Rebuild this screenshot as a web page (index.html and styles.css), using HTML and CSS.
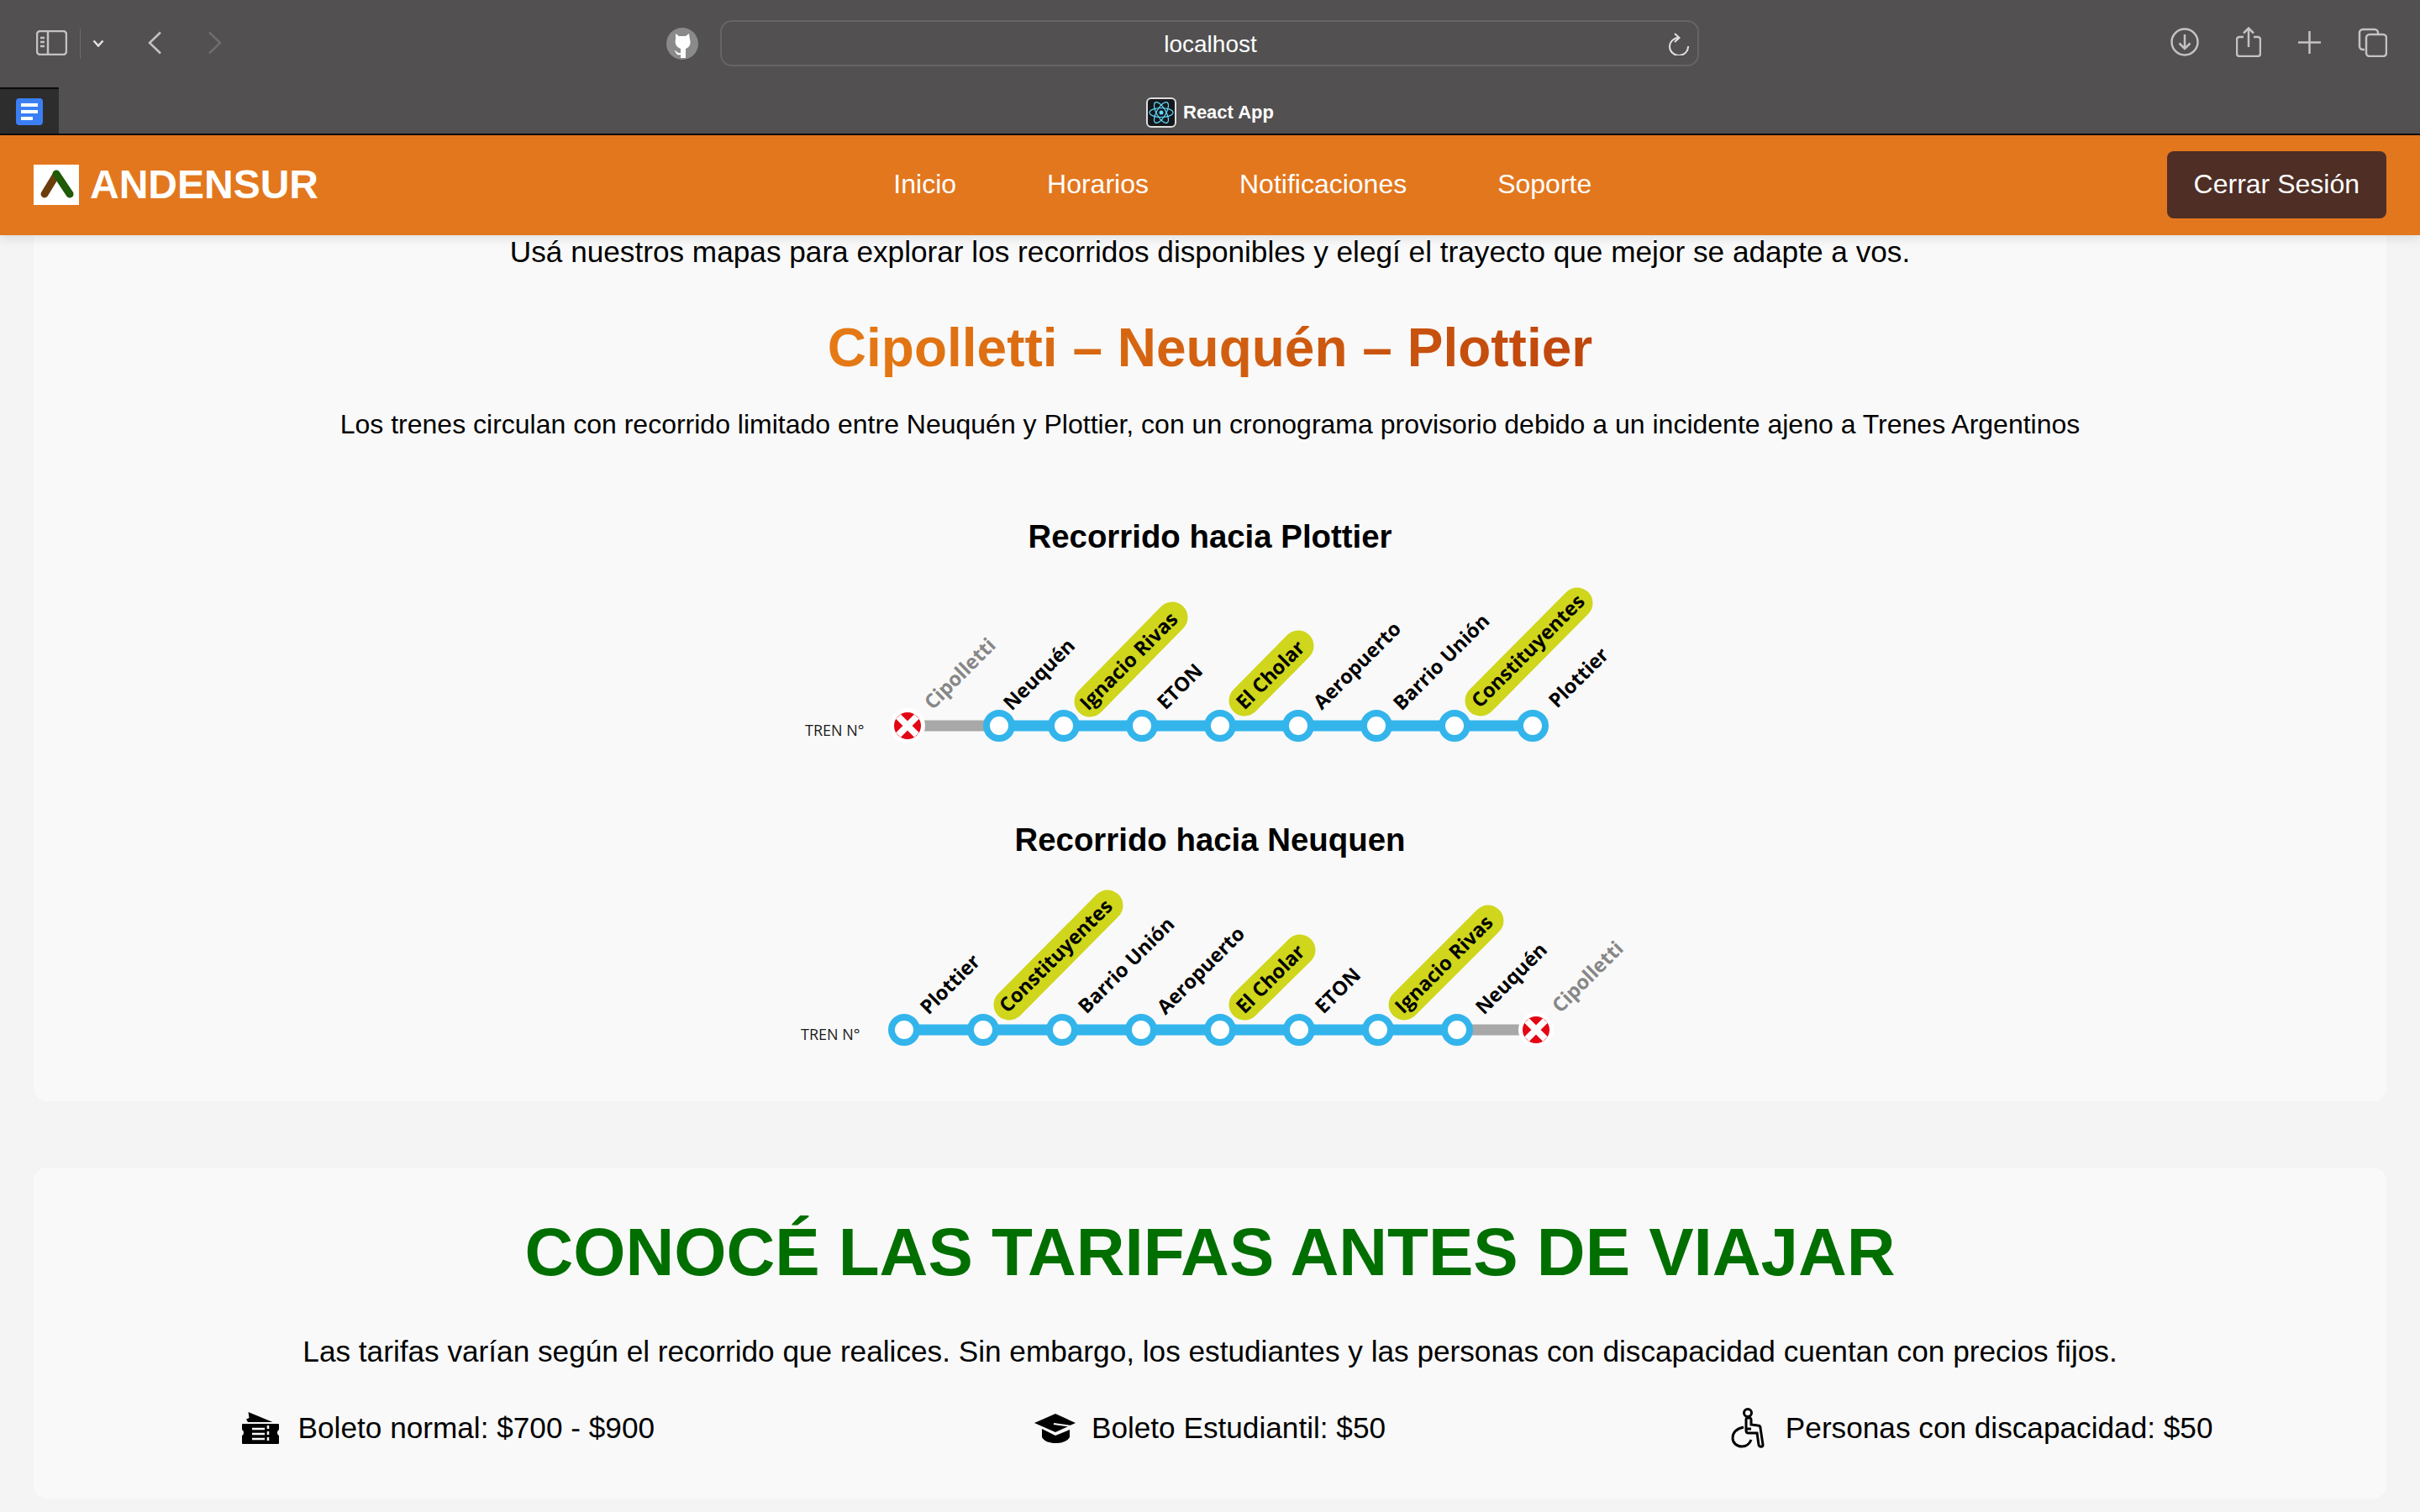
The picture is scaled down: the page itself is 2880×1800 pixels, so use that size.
FILE: index.html
```html
<!DOCTYPE html>
<html lang="es">
<head>
<meta charset="utf-8">
<title>React App</title>
<link rel="stylesheet" href="styles.css">
</head>
<body>
<div class="browser">
  <div class="chrome">
    <div class="toolbar">
      <div class="tool-left">
        <svg class="ic-sidebar" viewBox="0 0 37 30"><rect x="1" y="1" width="35" height="28" rx="4"/><path d="M14 1v28M5 9h5M5 14h5M5 19h5"/></svg>
        <span class="divider"></span>
        <svg class="ic-chev" viewBox="0 0 14 9"><path d="M1.5 1.5 7 7.5l5.500-6"/></svg>
        <svg class="ic-back" viewBox="0 0 17 28"><path d="M15 1.500 2 14l13 12.500"/></svg>
        <svg class="ic-fwd" viewBox="0 0 17 28"><path d="M2 1.500 15 14 2 26.500"/></svg>
      </div>
      <div class="tool-mid">
        <svg class="ic-gh" viewBox="0 0 38 38"><circle cx="19" cy="19" r="19" fill="#8a8a8a"/><path fill="#fff" d="M11 7l4 3h8l4-3 1 7c1 2 1 8-3 10l-2 1v11h-6v-4c-3 1-5 0-6-3l-2-2 3 1c1 2 3 2 5 2v-5l-2-1c-4-2-5-7-4-10z"/></svg>
        <div class="urlbar">
          <span class="url-text">localhost</span>
          <svg class="ic-reload" viewBox="0 0 24 27"><path d="M23 16A11 10.500 0 1 1 12 6M7 1l5.500 5L7 11"/></svg>
        </div>
      </div>
      <div class="tool-right">
        <svg class="ic-dl" viewBox="0 0 34 34"><circle cx="17" cy="17" r="15.500"/><path d="M17 8v17M10.500 18.500 17 25l6.500-6.500"/></svg>
        <svg class="ic-share" viewBox="0 0 30 36"><path d="M9 12H4a3 3 0 0 0-3 3v17a3 3 0 0 0 3 3h22a3 3 0 0 0 3-3V15a3 3 0 0 0-3-3h-5M15 24V2M9 7.500 15 1.500l6 6"/></svg>
        <svg class="ic-plus" viewBox="0 0 27 27"><path d="M13.500 0v27M0 13.500h27"/></svg>
        <svg class="ic-tabs" viewBox="0 0 35 35"><path d="M8 26H6a4 4 0 0 1-4-4V6a4 4 0 0 1 4-4h14a4 4 0 0 1 4 4v1"/><rect x="10" y="8" width="24" height="26" rx="4"/></svg>
      </div>
    </div>
    <div class="tabstrip">
      <div class="pinned">
        <svg class="ic-doc" viewBox="0 0 32 32"><rect width="32" height="32" rx="4" fill="#3b7ff5"/><path fill="#fff" d="M6 6h20v4H6zM6 14h20v4H6zM6 22h14v4H6z"/></svg>
      </div>
      <div class="tab-title">
        <svg class="ic-react" viewBox="0 0 36 36"><rect x="1" y="1" width="34" height="34" rx="5" fill="#14181c" stroke="#ddd" stroke-width="2"/><g fill="none" stroke="#61dafb" stroke-width="1.200"><ellipse cx="18" cy="18" rx="14" ry="5.500"/><ellipse cx="18" cy="18" rx="14" ry="5.500" transform="rotate(60 18 18)"/><ellipse cx="18" cy="18" rx="14" ry="5.500" transform="rotate(120 18 18)"/></g><circle cx="18" cy="18" r="2.500" fill="#61dafb"/></svg>
        <span>React App</span>
      </div>
    </div>
  </div>

  <header class="site-header">
    <div class="brand">
      <svg class="logo" viewBox="0 0 54 48"><rect width="54" height="48" fill="#fff"/><path d="M27 12 13 35" stroke="#6a3d0c" stroke-width="9" stroke-linecap="round" fill="none"/><path d="M27 11 43 35" stroke="#1f5a06" stroke-width="9" stroke-linecap="round" fill="none"/></svg>
      <span class="brand-name">ANDENSUR</span>
    </div>
    <nav class="nav">
      <a>Inicio</a><a>Horarios</a><a>Notificaciones</a><a>Soporte</a>
    </nav>
    <button class="logout">Cerrar Sesión</button>
  </header>

  <main class="page">
    <section class="card card-routes">
      <p class="lead">Usá nuestros mapas para explorar los recorridos disponibles y elegí el trayecto que mejor se adapte a vos.</p>
      <h2 class="route-title">Cipolletti – Neuquén – Plottier</h2>
      <p class="route-note">Los trenes circulan con recorrido limitado entre Neuquén y Plottier, con un cronograma provisorio debido a un incidente ajeno a Trenes Argentinos</p>
      <h3 class="dir-title dir-first">Recorrido hacia Plottier</h3>
      <svg class="line-map" viewBox="935 680 1010 220">
        <line class="pill" x1="1297" y1="835" x2="1395" y2="735"/>
        <line class="pill" x1="1481" y1="834" x2="1545" y2="769"/>
        <line class="pill" x1="1762" y1="834" x2="1877" y2="718"/>
        <line class="rail-off" x1="1090" y1="864" x2="1180" y2="864"/>
        <line class="rail" x1="1189" y1="864" x2="1824" y2="864"/>
        <text class="tren" x="958" y="876">TREN N°</text>
        <circle class="x-ring" cx="1080" cy="864" r="21"/><circle class="x-dot" cx="1080" cy="864" r="16"/>
        <path class="x-mark" d="M1069 853l22 22M1091 853l-22 22"/>
        <circle class="stop" cx="1189" cy="864" r="15"/><circle class="stop" cx="1266" cy="864" r="15"/><circle class="stop" cx="1359" cy="864" r="15"/><circle class="stop" cx="1452" cy="864" r="15"/><circle class="stop" cx="1545" cy="864" r="15"/><circle class="stop" cx="1638" cy="864" r="15"/><circle class="stop" cx="1731" cy="864" r="15"/><circle class="stop" cx="1824" cy="864" r="15"/>
        <text class="lbl off" transform="translate(1110 846) rotate(-45)">Cipolletti</text>
        <text class="lbl" transform="translate(1204 847) rotate(-45)">Neuquén</text>
        <text class="lbl" transform="translate(1295 847) rotate(-45)">Ignacio Rivas</text>
        <text class="lbl" transform="translate(1387 846) rotate(-45)">ETON</text>
        <text class="lbl" transform="translate(1481 846) rotate(-45)">El Cholar</text>
        <text class="lbl" transform="translate(1573 846) rotate(-45)">Aeropuerto</text>
        <text class="lbl" transform="translate(1668 847) rotate(-45)">Barrio Unión</text>
        <text class="lbl" transform="translate(1761 844) rotate(-45)">Constituyentes</text>
        <text class="lbl" transform="translate(1853 844) rotate(-45)">Plottier</text>
      </svg>
      <h3 class="dir-title dir-second">Recorrido hacia Neuquen</h3>
      <svg class="line-map map-two" viewBox="935 1040 1010 230">
        <line class="pill" x1="1201" y1="1196" x2="1318" y2="1078"/>
        <line class="pill" x1="1481" y1="1196" x2="1547" y2="1131"/>
        <line class="pill" x1="1671" y1="1196" x2="1771" y2="1096"/>
        <line class="rail" x1="1076" y1="1226" x2="1734" y2="1226"/>
        <line class="rail-off" x1="1745" y1="1226" x2="1815" y2="1226"/>
        <text class="tren" x="953" y="1238">TREN N°</text>
        <circle class="stop" cx="1076" cy="1226" r="15"/><circle class="stop" cx="1170" cy="1226" r="15"/><circle class="stop" cx="1264" cy="1226" r="15"/><circle class="stop" cx="1358" cy="1226" r="15"/><circle class="stop" cx="1452" cy="1226" r="15"/><circle class="stop" cx="1546" cy="1226" r="15"/><circle class="stop" cx="1640" cy="1226" r="15"/><circle class="stop" cx="1734" cy="1226" r="15"/>
        <circle class="x-ring" cx="1828" cy="1226" r="21"/><circle class="x-dot" cx="1828" cy="1226" r="16"/>
        <path class="x-mark" d="M1817 1215l22 22M1839 1215l-22 22"/>
        <text class="lbl" transform="translate(1105 1209) rotate(-45)">Plottier</text>
        <text class="lbl" transform="translate(1199 1207) rotate(-45)">Constituyentes</text>
        <text class="lbl" transform="translate(1293 1208) rotate(-45)">Barrio Unión</text>
        <text class="lbl" transform="translate(1387 1209) rotate(-45)">Aeropuerto</text>
        <text class="lbl" transform="translate(1481 1208) rotate(-45)">El Cholar</text>
        <text class="lbl" transform="translate(1575 1208) rotate(-45)">ETON</text>
        <text class="lbl" transform="translate(1670 1208) rotate(-45)">Ignacio Rivas</text>
        <text class="lbl" transform="translate(1766 1209) rotate(-45)">Neuquén</text>
        <text class="lbl off" transform="translate(1857 1207) rotate(-45)">Cipolletti</text>
      </svg>
    </section>

    <section class="card card-fares">
      <h1 class="fares-title">CONOCÉ LAS TARIFAS ANTES DE VIAJAR</h1>
      <p class="lead fares-lead">Las tarifas varían según el recorrido que realices. Sin embargo, los estudiantes y las personas con discapacidad cuentan con precios fijos.</p>
      <ul class="fares">
        <li class="fare">
          <svg class="ic-ticket" viewBox="0 0 44 38"><path d="M7.500 0 36.500 12H7L5 8.500l3.500-1.500z"/><path d="M1 14h42a1 1 0 0 1 1 1v6a4 4 0 0 0 0 7v9a1 1 0 0 1-1 1H1a1 1 0 0 1-1-1v-9a4 4 0 0 0 0-7v-6a1 1 0 0 1 1-1z"/><path class="cut" d="M12 20h15M12 26h15M12 32h15"/><path class="cut dash" d="M31 16v20"/></svg>
          <span>Boleto normal: $700 - $900</span>
        </li>
        <li class="fare fare-mid">
          <svg class="ic-hat" viewBox="0 0 49 35"><path d="M25 0 49 11 25 22 0 11z"/><path d="M9 18l16 8 17-7v9c-3 5-10 7-17 7s-13-2-16-7z"/><path class="hat-line" d="M23 12l21 3v19"/></svg>
          <span>Boleto Estudiantil: $50</span>
        </li>
        <li class="fare fare-last">
          <svg class="ic-chair" viewBox="0 0 41 48"><circle cx="20" cy="6" r="4.500"/><path d="M19 12h3c1 0 2 1 2 2v6l8 1c2 0 3 1 3 3l3 20c0 3-4 3-5 0l-2-14H21c-2 0-3-1-3-3V14c0-1 0-2 1-2zM15 23C6 25 2 30 2 36c0 6 5 10 11 10 5 0 9-3 11-8M24 25h-6"/></svg>
          <span>Personas con discapacidad: $50</span>
        </li>
      </ul>
    </section>
  </main>
</div>
</body>
</html>
```
FILE: styles.css
```css
* { box-sizing: border-box; }
html, body { margin: 0; padding: 0; }
body { font-family: "Liberation Sans", Arial, sans-serif; background: #f4f4f4; color: #000; }
.browser { width: 2880px; height: 1800px; overflow: hidden; display: flex; flex-direction: column; }

/* Browser chrome */
.chrome { height: 161px; background: #525051; border-bottom: 2px solid #0c0c0c; flex: none; display: flex; flex-direction: column; }
.toolbar { height: 104px; position: relative; display: flex; align-items: flex-start; flex: none; }
.toolbar svg { fill: none; stroke: #c4c3c3; stroke-width: 2.500; display: block; flex: none; }
.tool-left { width: 793px; display: flex; align-items: flex-start; padding: 36px 0 0 43px; }
.ic-sidebar { width: 37px; height: 30px; }
.divider { width: 1px; height: 36px; background: #6c6b6b; margin: -2px 0 0 15px; }
.toolbar .ic-chev { width: 14px; height: 9px; margin: 11px 0 0 14px; stroke: #e4e4e4; stroke-width: 2.500; }
.ic-back { width: 17px; height: 28px; margin: 1px 0 0 52px; }
.toolbar .ic-fwd { width: 17px; height: 28px; margin: 1px 0 0 54px; stroke: #6f6e6e; }
.tool-mid { display: flex; align-items: flex-start; padding-top: 24px; }
.toolbar .ic-gh { width: 38px; height: 38px; margin: 9px 26px 0 0; stroke: none; }
.urlbar { width: 1165px; height: 55px; border: 2px solid #666565; border-radius: 14px; display: flex; align-items: center; justify-content: center; padding-top: 2px; position: relative; }
.url-text { color: #fff; font-size: 28px; margin-left: 2px; }
.toolbar .ic-reload { position: absolute; right: 10px; top: 13px; width: 24px; height: 27px; stroke: #e0e0e0; stroke-width: 2; }
.tool-right { margin-left: auto; display: flex; align-items: center; gap: 44px; padding: 32px 39px 0 0; }
.ic-dl { width: 34px; height: 34px; }
.ic-share { width: 30px; height: 36px; }
.ic-plus { width: 27px; height: 27px; }
.ic-tabs { width: 35px; height: 35px; }
.tabstrip { flex: 1; position: relative; display: flex; align-items: center; justify-content: center; }
.pinned { position: absolute; left: 0; top: 0; bottom: 0; width: 70px; background: #2d2d2d; border-top: 2px solid #0c0c0c; padding: 11px 0 0 19px; }
.ic-doc { width: 32px; height: 32px; display: block; }
.tab-title { display: flex; align-items: center; gap: 8px; color: #fff; font-size: 22px; font-weight: 700; transform: translateY(2px); }
.ic-react { width: 36px; height: 36px; display: block; }

/* Site header */
.site-header { height: 119px; flex: none; background: #e3771e; display: flex; align-items: center; justify-content: space-between; padding: 0 40px 1px; position: relative; z-index: 2; box-shadow: 0 4px 12px rgba(0,0,0,.1); }
.brand { display: flex; align-items: center; gap: 13px; }
.logo { width: 54px; height: 48px; display: block; }
.brand-name { color: #fff; font-size: 48px; font-weight: 700; margin-top: -2px; }
.nav { display: flex; gap: 108px; margin-top: -2px; }
.nav a { color: #fff; font-size: 32px; }
.logout { height: 80px; padding: 0 32px 2px; border: 0; border-radius: 8px; background: #4e2e25; color: #fff; font: 32px "Liberation Sans", Arial, sans-serif; }

/* Page */
.page { flex: 1; min-height: 0; padding: 0 40px; }
.card { background: #f9f9f9; border-radius: 16px; text-align: center; }
.card-routes { height: 1031px; border-radius: 0 0 16px 16px; padding-top: 1px; }
.card-fares { margin-top: 79px; padding: 53px 80px 0; height: 394px; }
.lead { margin: 0; font-size: 35.200px; line-height: 38px; }
.route-title { margin: 58px auto 0; font-size: 64px; line-height: 74px; font-weight: 700; background: linear-gradient(90deg, #e67a14, #bf460c); -webkit-background-clip: text; background-clip: text; color: transparent; width: max-content; }
.route-note { margin: 36px 0 0; font-size: 32px; line-height: 37px; }
.dir-title { margin: 0; font-size: 38.400px; line-height: 46px; font-weight: 700; }
.dir-first { margin-top: 92px; }
.dir-second { margin-top: 77px; }
.line-map { display: block; width: 1010px; height: 220px; margin: 18px auto 0; }
.map-two { height: 230px; margin-top: 17px; }
.pill { stroke: #cfd61c; stroke-width: 37; stroke-linecap: round; }
.rail { stroke: #33b5ec; stroke-width: 13; }
.rail-off { stroke: #a9a8a8; stroke-width: 13; }
.stop { fill: #fff; stroke: #33b5ec; stroke-width: 8; }
.x-ring { fill: #fff; }
.x-dot { fill: #e30613; }
.x-mark { stroke: #fff; stroke-width: 8; fill: none; }
.tren { font-family: "Open Sans", sans-serif; font-size: 18px; fill: #1a1a1a; }
.lbl { font-family: "Open Sans", sans-serif; font-size: 23.600px; font-weight: 700; fill: #000; }
.lbl.off { fill: #878787; }
.fares-title { margin: 0; font-size: 80px; line-height: 96px; font-weight: 700; color: #006f00; }
.fares-lead { margin-top: 49px; line-height: 41px; }
.fares { list-style: none; margin: 47px -40px 0; padding: 0; display: grid; grid-template-columns: repeat(3, 1fr); }
.fare { display: flex; align-items: center; justify-content: center; height: 48px; gap: 23px; font-size: 35.200px; }
.fare-mid { gap: 19px; }
.fare-last { gap: 24px; }
.fare svg { display: block; flex: none; }
.ic-ticket { width: 44px; height: 38px; }
.cut { stroke: #f9f9f9; stroke-width: 2.500; fill: none; }
.dash { stroke-dasharray: 4 3; }
.ic-hat { width: 49px; height: 35px; }
.hat-line { fill: none; stroke: #f9f9f9; stroke-width: 2; }
.ic-chair { width: 41px; height: 48px; fill: none; stroke: #000; stroke-width: 3; }
```
